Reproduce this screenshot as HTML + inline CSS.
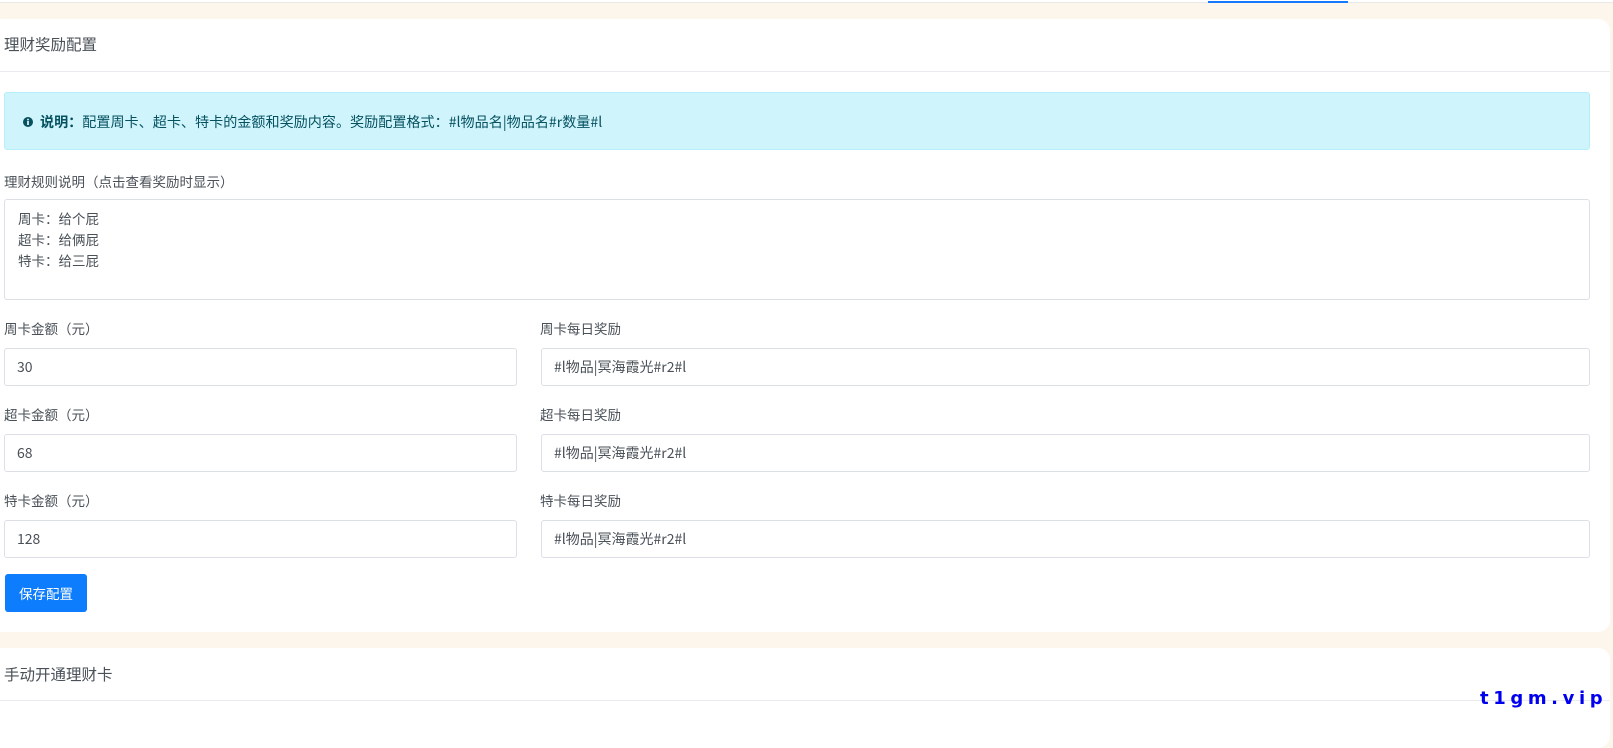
<!DOCTYPE html>
<html><head><meta charset="utf-8"><style>
*{box-sizing:border-box;margin:0;padding:0}
body{width:1613px;height:714px;overflow:hidden;background:#fdf6ec;font-family:"Noto Sans CJK SC","Liberation Sans",sans-serif;color:#495057;position:relative}
.top{position:absolute;left:0;top:0;width:1613px;height:3px;background:#fff;border-bottom:1px solid #e8e8e8}
.top i{position:absolute;left:1208px;top:1px;width:140px;height:2px;background:#1677ff}
.card{position:absolute;left:-10px;width:1620px;background:#fff;border-radius:12px}
.a{position:absolute;font-size:14px;white-space:nowrap;line-height:20px}
.ttl{font-size:15.5px}
.line{position:absolute;left:0;width:1620px;height:1px;background:#e9ebee}
.box{position:absolute;border:1px solid #dcdfe6;border-radius:3px;background:#fff}
.inp{height:38px;font-size:14px;line-height:36px;padding-left:12px;color:#495057}
</style></head><body>
<div class="top"><i></i></div>
<div class="card" style="top:19px;height:613px">
  <div class="a ttl" style="left:14px;top:15px">理财奖励配置</div>
  <div class="line" style="top:52px"></div>
  <div style="position:absolute;left:14px;top:73px;width:1586px;height:58px;background:#cff4fc;border:1px solid #b6effb;border-radius:3px"></div>
  <svg style="position:absolute;left:33px;top:98px" width="10" height="10" viewBox="0 0 10 10"><circle cx="5" cy="5" r="5" fill="#055160"/><rect x="4.2" y="4" width="1.6" height="4" fill="#fff"/><rect x="4.2" y="1.8" width="1.6" height="1.5" fill="#fff"/></svg>
  <div class="a" style="left:50px;top:93px;font-size:14.1px;color:#055160"><b>说明：</b>配置周卡、超卡、特卡的金额和奖励内容。奖励配置格式：#l物品名|物品名#r数量#l</div>
  <div class="a" style="left:14px;top:152px;font-size:13.5px">理财规则说明（点击查看奖励时显示）</div>
  <div class="box" style="left:14px;top:180px;width:1586px;height:101px;padding:8px 13px;font-size:13.5px;line-height:21px">周卡：给个屁<br>超卡：给俩屁<br>特卡：给三屁</div>

  <div class="a" style="left:14px;top:299px;font-size:13.5px">周卡金额（元）</div>
  <div class="a" style="left:550px;top:299px;font-size:13.5px">周卡每日奖励</div>
  <div class="box inp" style="left:14px;top:329px;width:513px">30</div>
  <div class="box inp" style="left:551px;top:329px;width:1049px">#l物品|冥海霞光#r2#l</div>

  <div class="a" style="left:14px;top:385px;font-size:13.5px">超卡金额（元）</div>
  <div class="a" style="left:550px;top:385px;font-size:13.5px">超卡每日奖励</div>
  <div class="box inp" style="left:14px;top:415px;width:513px">68</div>
  <div class="box inp" style="left:551px;top:415px;width:1049px">#l物品|冥海霞光#r2#l</div>

  <div class="a" style="left:14px;top:471px;font-size:13.5px">特卡金额（元）</div>
  <div class="a" style="left:550px;top:471px;font-size:13.5px">特卡每日奖励</div>
  <div class="box inp" style="left:14px;top:501px;width:513px">128</div>
  <div class="box inp" style="left:551px;top:501px;width:1049px">#l物品|冥海霞光#r2#l</div>

  <div style="position:absolute;left:15px;top:555px;width:82px;height:38px;background:#0d7dfd;border-radius:3px;color:#fff;font-size:13.5px;line-height:38px;text-align:center">保存配置</div>
</div>
<div class="card" style="top:648px;height:100px">
  <div class="a ttl" style="left:14px;top:16px">手动开通理财卡</div>
  <div class="line" style="top:52px"></div>
</div>
<div style="position:absolute;left:1480px;top:689px;font-family:'DejaVu Sans',sans-serif;font-weight:bold;font-size:18px;letter-spacing:4.6px;color:#0000ee;line-height:20px;white-space:nowrap">t1gm.vip</div>
</body></html>
